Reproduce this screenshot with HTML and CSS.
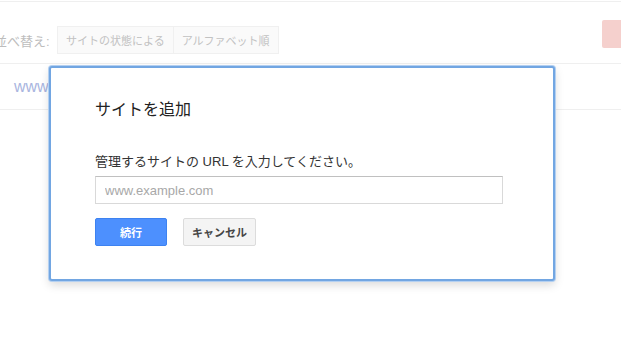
FILE: index.html
```html
<!DOCTYPE html>
<html lang="ja">
<head>
<meta charset="UTF-8">
<meta name="viewport" content="width=device-width, initial-scale=1.0">
<title>サイトを追加</title>
<link rel="stylesheet" href="styles.css">
</head>
<body>

<div class="topline"></div>

<div class="sort-row">
    <span class="sort-label">並べ替え:</span>
    <div class="sort-group">
        <button class="sort-btn">サイトの状態による</button>
        <button class="sort-btn">アルファベット順</button>
    </div>
    <div class="add-btn"></div>
</div>

<div class="site-row">
    <span class="site-link">www</span>
</div>

<!-- Dialogo -->
<div class="dialog">
    <h2 class="dialog-title">サイトを追加</h2>
    <label class="dialog-label" for="url">管理するサイトの URL を入力してください。</label>
    <input class="dialog-input" id="url" type="text" placeholder="www.example.com">
    <div class="dialog-buttons">
        <button class="btn btn-primary">続行</button>
        <button class="btn btn-cancel">キャンセル</button>
    </div>
</div>

</body>
</html>
```
FILE: styles.css
```css
:root {
    --line: #efefef;
    --blue: #4d90fe;
    --text-color: #222;
}

body {
    margin: 0;
    padding: 0;
    font-family: "Liberation Sans", "Noto Sans CJK JP", sans-serif;
    background-color: #fff;
    color: var(--text-color);
    overflow: hidden;
}

.topline {
    height: 1px;
    border-bottom: 1px solid var(--line);
}

.sort-row {
    display: flex;
    align-items: center;
    padding: 24px 0 9px 0;
    border-bottom: 1px solid var(--line);
}

.sort-label {
    margin-left: -6px;
    font-size: 13px;
    color: #bdbdbd;
    width: 63px;
}

.sort-group {
    display: flex;
}

.sort-btn {
    height: 28px;
    padding: 0 8px;
    font-family: inherit;
    font-size: 11px;
    color: #c2c2c2;
    background-color: #fafafa;
    border: 1px solid #f0f0f0;
    margin: 0;
}

.sort-btn + .sort-btn {
    border-left: none;
}

.add-btn {
    margin-left: auto;
    align-self: flex-start;
    margin-top: -6px;
    width: 19px;
    height: 28px;
    background-color: #f5d0cd;
    border-radius: 2px 0 0 2px;
}

.site-row {
    height: 45px;
    display: flex;
    align-items: center;
    padding-left: 14px;
    border-bottom: 1px solid var(--line);
}

.site-link {
    font-size: 16px;
    color: #a9b5e0;
}

.dialog {
    position: absolute;
    left: 49px;
    top: 66px;
    width: 413px;
    padding: 30px 45px 33px 44px;
    background-color: #fff;
    border: 2px solid #72a6e2;
    border-radius: 3px;
    box-shadow: 0 0 0 1px #b4d0f1, 0 4px 10px rgba(0, 0, 0, 0.15);
}

.dialog-title {
    margin: 0;
    font-size: 16px;
    font-weight: normal;
    line-height: 24px;
    color: #222;
}

.dialog-label {
    display: block;
    margin-top: 31px;
    font-size: 13px;
    line-height: 18px;
    color: #333;
}

.dialog-input {
    display: block;
    box-sizing: border-box;
    width: 408px;
    height: 28px;
    margin-top: 5px;
    padding: 0 9px;
    font-family: "Liberation Sans", sans-serif;
    font-size: 13px;
    border: 1px solid #d9d9d9;
    border-top-color: #c0c0c0;
    outline: none;
}

.dialog-input::placeholder {
    color: #a8a8a8;
}

.dialog-buttons {
    display: flex;
    gap: 16px;
    margin-top: 14px;
}

.btn {
    height: 28px;
    font-family: inherit;
    font-size: 11px;
    font-weight: bold;
    border-radius: 2px;
    margin: 0;
}

.btn-primary {
    width: 72px;
    color: #fff;
    background-color: var(--blue);
    border: 1px solid #3d82f0;
}

.btn-cancel {
    width: 73px;
    color: #444;
    background-color: #f4f4f4;
    border: 1px solid #dcdcdc;
}
```
